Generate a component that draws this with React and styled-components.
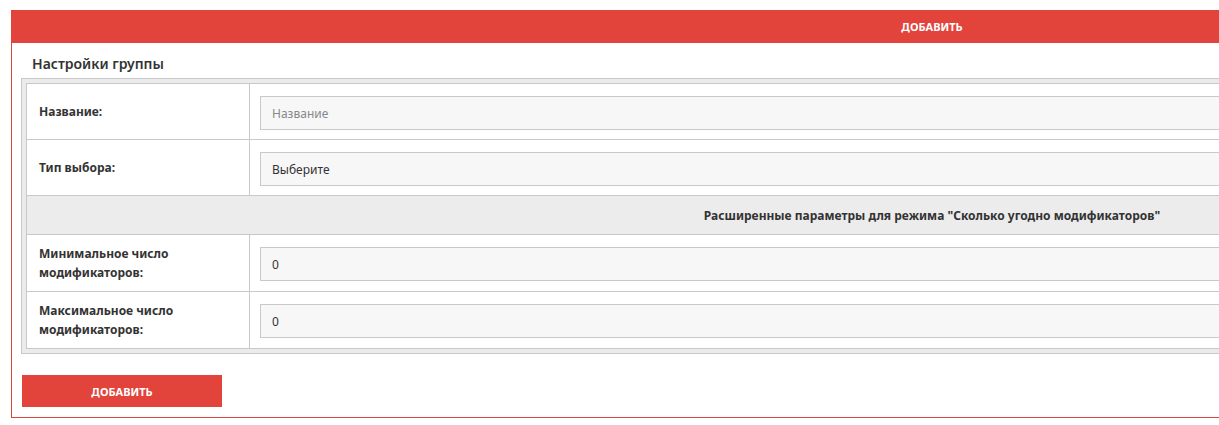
import React from "react";
import styled, {createGlobalStyle} from "styled-components";

const GlobalStyle = createGlobalStyle`
  body {
    margin: 0;
    background: #fff;
    overflow: hidden;
    font-family: "Noto Sans", "Open Sans", sans-serif;
    color: #333;
  }
`;

const Page = styled.div`
  padding: 10px 0 0 11px;
`;

const Panel = styled.div`
  width: 1840px;
  border: 1px solid #d9463c;
  border-top: none;
  padding-bottom: 10px;
`;

const PanelHeader = styled.div`
  height: 33px;
  margin-left: -1px;
  margin-right: -1px;
  background: #e2433a;
  color: #fff;
  font-size: 11px;
  font-weight: 700;
  display: flex;
  align-items: center;
  justify-content: center;
`;

const PanelBody = styled.div`
  padding: 0 9px;
`;

const Title = styled.h3`
  margin: 0;
  padding: 11px 0 0 11px;
  height: 24px;
  font-size: 14px;
  font-weight: 600;
  line-height: 20px;
  color: #333;
`;

const TableFrame = styled.div`
  border: 1px solid #c9c9c9;
  background: #ebebeb;
  padding: 4px;
`;

const Table = styled.div`
  display: grid;
  grid-template-columns: 222px 1fr;
  background: #fff;
  border: 1px solid #c9c9c9;
`;

const Label = styled.div`
  display: flex;
  align-items: center;
  min-height: 55px;
  box-sizing: border-box;
  padding: ${(props) => (props.wrap ? "9px 12px" : "0 12px")};
  font-size: 12px;
  font-weight: 700;
  line-height: 19px;
  border-bottom: ${(props) => (props.last ? "none" : "1px solid #c9c9c9")};
`;

const Field = styled.div`
  padding: ${(props) => (props.wrap ? "12px 10px 10px" : "12px 10px 9px")};
  border-left: 1px solid #c9c9c9;
  border-bottom: ${(props) => (props.last ? "none" : "1px solid #c9c9c9")};
`;

const Input = styled.input`
  box-sizing: border-box;
  width: 100%;
  height: 34px;
  padding: 0 11px;
  border: 1px solid #c9c9c9;
  background: #f7f7f7;
  font-family: inherit;
  font-size: 12px;
  color: #333;
  outline: none;
  &::placeholder {
    color: #888;
  }
`;

const Select = styled.div`
  box-sizing: border-box;
  height: 34px;
  padding: 0 11px;
  border: 1px solid #c9c9c9;
  background: #f7f7f7;
  font-size: 12px;
  display: flex;
  align-items: center;
`;

const Section = styled.div`
  grid-column: 1 / -1;
  height: 38px;
  display: flex;
  align-items: center;
  justify-content: center;
  background: #ececec;
  border-bottom: 1px solid #c9c9c9;
  font-size: 12px;
  font-weight: 700;
`;

const Button = styled.button`
  display: block;
  width: 200px;
  height: 32px;
  margin: 21px 0 0 1px;
  border: none;
  background: #e2433a;
  color: #fff;
  font-family: inherit;
  font-size: 11px;
  font-weight: 700;
  cursor: pointer;
`;

export default function App() {
    return (
        <Page>
            <GlobalStyle/>
            <Panel>
                <PanelHeader>ДОБАВИТЬ</PanelHeader>
                <PanelBody>
                    <Title>Настройки группы</Title>
                    <TableFrame>
                        <Table>
                            <Label>Название:</Label>
                            <Field>
                                <Input placeholder="Название"/>
                            </Field>
                            <Label>Тип выбора:</Label>
                            <Field>
                                <Select>Выберите</Select>
                            </Field>
                            <Section>Расширенные параметры для режима "Сколько угодно модификаторов"</Section>
                            <Label wrap>Минимальное число<br/>модификаторов:</Label>
                            <Field wrap>
                                <Input defaultValue="0"/>
                            </Field>
                            <Label wrap last>Максимальное число<br/>модификаторов:</Label>
                            <Field wrap last>
                                <Input defaultValue="0"/>
                            </Field>
                        </Table>
                    </TableFrame>
                    <Button>ДОБАВИТЬ</Button>
                </PanelBody>
            </Panel>
        </Page>
    );
}
